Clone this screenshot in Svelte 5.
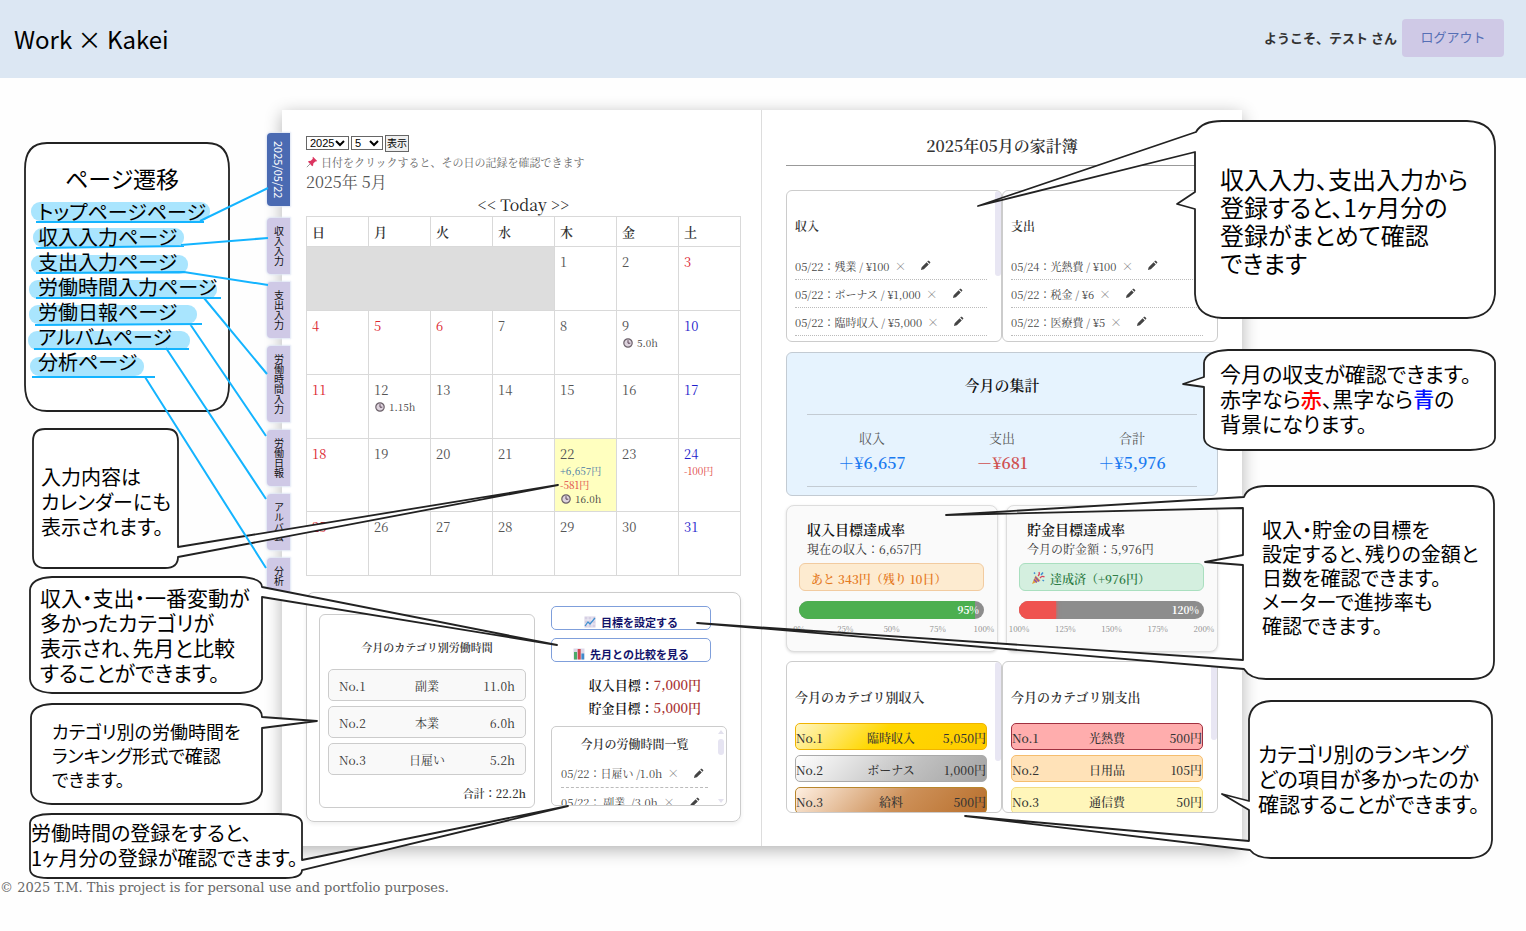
<script>
  const tabs = ['収入入力', '支出入力', '労働時間入力', '労働日報', 'アルバム', '分析'];
  const weekdays = ['日', '月', '火', '水', '木', '金', '土'];
  const notes = {
    9: { hours: '5.0h' },
    12: { hours: '1.15h' },
    22: { income: '+6,657円', expense: '-581円', hours: '16.0h' },
    24: { expense: '-100円' }
  };
  const holidays = [3, 4, 5, 6, 11, 18, 25];
  const blueDays = [10, 17, 24, 31];
  const weeks = [4, 11, 18, 25].map((s) => Array.from({ length: 7 }, (_, i) => s + i));

  const workRanks = [
    ['No.1', '副業', '11.0h'],
    ['No.2', '本業', '6.0h'],
    ['No.3', '日雇い', '5.2h']
  ];
  const ledgers = [
    { title: '収入', thumb: true, rows: ['05/22：残業 / ¥100', '05/22：ボーナス / ¥1,000', '05/22：臨時収入 / ¥5,000'] },
    { title: '支出', thumb: false, rows: ['05/24：光熱費 / ¥100', '05/22：税金 / ¥6', '05/22：医療費 / ¥5'] }
  ];
  const totals = [
    { label: '収入', value: '＋¥6,657', minus: false },
    { label: '支出', value: '－¥681', minus: true },
    { label: '合計', value: '＋¥5,976', minus: false }
  ];
  const goals = [
    { title: '収入目標達成率', sub: '現在の収入：6,657円', badge: 'あと 343円（残り 10日）', done: false, pct: '95%', fill: 95, ticks: ['0%', '25%', '50%', '75%', '100%'] },
    { title: '貯金目標達成率', sub: '今月の貯金額：5,976円', badge: '達成済（+976円）', done: true, pct: '120%', fill: 20, ticks: ['100%', '125%', '150%', '175%', '200%'] }
  ];
  const categories = [
    { title: '今月のカテゴリ別収入', kind: 'in', rows: [['No.1', '臨時収入', '5,050円'], ['No.2', 'ボーナス', '1,000円'], ['No.3', '給料', '500円']] },
    { title: '今月のカテゴリ別支出', kind: 'out', rows: [['No.1', '光熱費', '500円'], ['No.2', '日用品', '105円'], ['No.3', '通信費', '50円']] }
  ];

  const bubbles = [
    'M47 143H207Q229 143 229 169V385Q229 411 207 411H47Q25 411 25 385V169Q25 143 47 143Z',
    'M45 429H167Q178 429 178 441V547L558 485L178 557Q178 568 165 568H45Q33 568 33 556V441Q33 429 45 429Z',
    'M52 577H240Q262 578 262 587L557 645L262 597V679Q260 692 240 693H52Q31 692 30 679V590Q31 578 52 577Z',
    'M52 704H240Q262 705 262 717L317 721L262 728V791Q260 803 240 804H52Q32 803 31 791V717Q32 705 52 704Z',
    'M52 814H278Q301 814 302 823V860L568 806L302 870Q302 878 285 878H48Q30 878 30 869V823Q31 814 52 814Z',
    'M1222 121H1467Q1495 122 1495 147V294Q1493 317 1467 318H1222Q1196 317 1195 294V209L1177 204L1195 192V152L978 206L1196 132Q1202 121 1222 121Z',
    'M1228 350H1470Q1494 351 1495 363V438Q1494 449 1470 450H1228Q1205 449 1204 438V387L1183 384L1204 377V363Q1205 351 1228 350Z',
    'M1266 486H1473Q1494 487 1494 504V661Q1494 678 1473 679H1266Q1250 679 1244 669L697 623L1243 660V565L1205 562L1243 555V508L946 515L1244 497Q1248 486 1266 486Z',
    'M1271 701H1470Q1492 702 1492 719V840Q1491 857 1470 858H1271Q1256 858 1250 850L965 816L1249 841V810L1222 794L1249 801V719Q1251 702 1271 701Z'
  ];
  const highlights = [[31, 202, 179], [33, 228, 151], [31, 255, 157], [29, 280, 188], [29, 305, 168], [28, 331, 162], [30, 357, 114]];
  const links = [
    'M36 222H204M200 221L268 188', 'M36 248L184 246M181 245L268 238', 'M36 273L184 272L268 285', 'M36 298H221M204 298L267 374',
    'M35 325L202 324M190 324L266 436', 'M34 349H189M166 348L266 499', 'M32 377H155M145 377L266 568'
  ];
  const pages = ['トップページページ', '収入入力ページ', '支出入力ページ', '労働時間入力ページ', '労働日報ページ', 'アルバムページ', '分析ページ'];
  const captions = [
    { x: 65, y: 164, size: 't', lines: ['ページ遷移'] },
    { x: 38, y: 199, size: 'p', lines: pages },
    { x: 41, y: 464, size: 'p', lines: ['入力内容は', 'カレンダーにも', '表示されます。'] },
    { x: 40, y: 585, size: 'm', lines: ['収入・支出・一番変動が', '多かったカテゴリが', '表示され、先月と比較', 'することができます。'] },
    { x: 52, y: 719, size: 's', lines: ['カテゴリ別の労働時間を', 'ランキング形式で確認', 'できます。'] },
    { x: 31, y: 820, size: 'p', lines: ['労働時間の登録をすると、', '1ヶ月分の登録が確認できます。'] },
    { x: 1220, y: 165, size: 'l', lines: ['収入入力、支出入力から', '登録すると、1ヶ月分の', '登録がまとめて確認', 'できます'] },
    { x: 1262, y: 518, size: 'n', lines: ['収入・貯金の目標を', '設定すると、残りの金額と', '日数を確認できます。', 'メーターで進捗率も', '確認できます。'] },
    { x: 1258, y: 741, size: 'm', lines: ['カテゴリ別のランキング', 'どの項目が多かったのか', '確認することができます。'] }
  ];
</script>

{#snippet pencil()}
  <svg class="pencil" viewBox="0 0 12 12" aria-hidden="true"><path d="M1 11l.8-3.2L7.200 2.400l2.400 2.400L4.200 10.200zM7.900 1.700l.8-.8q.5-.4 1 0l1.400 1.400q.4.500 0 1l-.8.8z" fill="#444" /></svg>
{/snippet}
{#snippet clock()}
  <svg class="clock" viewBox="0 0 12 12" aria-hidden="true"><circle cx="6" cy="6" r="4.200" fill="#ddd3dd" stroke="#6b6069" stroke-width="1.200" /><path d="M6 3.200v3h2.300" fill="none" stroke="#5c4658" /></svg>
{/snippet}
{#snippet entry(text)}
  <li><span>{text}</span><button class="x" aria-label="削除">×</button><button aria-label="編集">{@render pencil()}</button></li>
{/snippet}

<header>
  <h1>Work × Kakei</h1>
  <div class="user"><span>ようこそ、テスト さん</span><button class="logout">ログアウト</button></div>
</header>

<main>
  <div class="book">
    <nav class="tabs">
      <a class="active" href="#top">2025/05/22</a>
      {#each tabs as t}<a href="#{t}">{t}</a>{/each}
    </nav>

    <section class="page left">
      <form class="picker">
        <select class="year" aria-label="年"><option>2025</option></select>
        <select class="month" aria-label="月"><option>5</option></select>
        <button type="button">表示</button>
      </form>
      <p class="hint">
        <svg viewBox="0 0 12 12" aria-hidden="true"><path d="M7 .8L11.200 5l-1.100.5-.8-.1-2 2-.2 2.100-.9.700L2 5.800l.8-.9 2-.2 2-2-.2-1.100z" fill="#dc3560" /><path d="M4.200 7.800L.8 11.200" stroke="#999" /></svg>
        日付をクリックすると、その日の記録を確認できます
      </p>
      <p class="ym">2025年 5月</p>
      <p class="today"><a href="#prev">&lt;&lt;</a> <a href="#today">Today</a> <a href="#next">&gt;&gt;</a></p>
      <table>
        <thead><tr>{#each weekdays as w}<th>{w}</th>{/each}</tr></thead>
        <tbody>
          <tr><td class="blank" colspan="4"></td><td>1</td><td>2</td><td class="red">3</td></tr>
          {#each weeks as week}
            <tr>
              {#each week as d}
                <td class:red={holidays.includes(d)} class:blue={blueDays.includes(d)} class:current={d === 22}>
                  {d}
                  {#if notes[d]}
                    {#if notes[d].income}<div class="note plus">{notes[d].income}</div>{/if}
                    {#if notes[d].expense}<div class="note minus">{notes[d].expense}</div>{/if}
                    {#if notes[d].hours}<div class="note hours">{@render clock()}{notes[d].hours}</div>{/if}
                  {/if}
                </td>
              {/each}
            </tr>
          {/each}
        </tbody>
      </table>

      <div class="work">
        <div class="ranking">
          <h3>今月のカテゴリ別労働時間</h3>
          <ol>
            {#each workRanks as r}<li><span>{r[0]}</span><span>{r[1]}</span><span>{r[2]}</span></li>{/each}
          </ol>
          <p>合計：22.2h</p>
        </div>
        <div class="side">
          <button class="action">
            <svg viewBox="0 0 12 12" aria-hidden="true"><path d="M.5.5h11v11H.5z" fill="#d5cfe3" /><path d="M.5 4h11M.5 8h11M4 .5v11M8 .5v11" stroke="#eeeaf5" /><path d="M1 10l3-4 2 2 5-6" fill="none" stroke="#3d8fd0" stroke-width="1.200" /></svg>
            目標を設定する
          </button>
          <button class="action">
            <svg viewBox="0 0 12 12" aria-hidden="true"><path d="M.5.5h11v11H.5z" fill="#dcd7e8" /><path d="M1 4h3v7.500H1z" fill="#4cab6a" /><path d="M4.700 1h3v10.500h-3z" fill="#d2474f" /><path d="M8.400 5.500h2.800v6H8.400z" fill="#3f8bcd" /></svg>
            先月との比較を見る
          </button>
          <dl>
            <div><dt>収入目標：</dt><dd>7,000円</dd></div>
            <div><dt>貯金目標：</dt><dd>5,000円</dd></div>
          </dl>
          <div class="hours-list">
            <h3>今月の労働時間一覧</h3>
            <ul>
              {@render entry('05/22：日雇い /1.0h')}
              {@render entry('05/22： 副業  /3.0h')}
            </ul>
            <svg class="bar" viewBox="0 0 10 78" aria-hidden="true"><path d="M5 3l3 4H2zM5 76l3-4H2z" fill="#e3e1ee" /><rect x="2" y="12" width="6" height="16" rx="3" fill="#e6e4f2" /></svg>
          </div>
        </div>
      </div>
    </section>

    <section class="page right">
      <h2>2025年05月の家計簿</h2>
      <div class="pair ledgers">
        {#each ledgers as l}
          <div class="panel" class:thumb={l.thumb}>
            <h3>{l.title}</h3>
            <ul>{#each l.rows as r}{@render entry(r)}{/each}</ul>
          </div>
        {/each}
      </div>

      <div class="summary">
        <h3>今月の集計</h3>
        <div class="totals">
          {#each totals as t}
            <div><span>{t.label}</span><strong class:neg={t.minus}>{t.value}</strong></div>
          {/each}
        </div>
      </div>

      <div class="goals">
        {#each goals as g}
          <div class="goal">
            <h3>{g.title}</h3>
            <p>{g.sub}</p>
            <div class="badge" class:done={g.done}>
              {#if g.done}
                <svg viewBox="0 0 14 14" aria-hidden="true"><path d="M1 13l3.500-8.500 5 5z" fill="#e2a13a" /><path d="M3 8.500l2.800 3M4.200 6l4 4.500" stroke="#8b4fb0" stroke-width="1.300" /><path d="M7 5q2-1.500 1-4M9 7q2-2.500 4.500-1" fill="none" stroke="#d9445b" stroke-width="1.300" /><path d="M10 4l2-2.500M3 1.500l1 1.200M11.500 9l1.500 1" stroke="#3d8fd0" stroke-width="1.500" /></svg>
              {/if}
              {g.badge}
            </div>
            <div class="meter"><div class="fill" class:over={g.done} style="width: {g.fill}%"></div><span>{g.pct}</span></div>
            <div class="ticks">{#each g.ticks as t}<span>{t}</span>{/each}</div>
          </div>
        {/each}
      </div>

      <div class="pair cats">
        {#each categories as c}
          <div class="panel thumb {c.kind}">
            <h3>{c.title}</h3>
            <ol>{#each c.rows as r}<li><span>{r[0]}</span><span>{r[1]}</span><span>{r[2]}</span></li>{/each}</ol>
          </div>
        {/each}
      </div>
    </section>

    <div class="guide">
      <svg viewBox="0 0 1520 931" aria-hidden="true">
        {#each bubbles as d}<path {d} fill="#fff" stroke="#222" stroke-width="1.800" stroke-linejoin="round" />{/each}
        {#each highlights as [x, y, w]}<rect {x} {y} width={w} height="19" rx="9" fill="#a9e5fe" />{/each}
        {#each links as d}<path {d} fill="none" stroke="#14b4ff" stroke-width="2" />{/each}
      </svg>
      <div class="caption m" style="left: 1220px; top: 361px">
        <p>今月の収支が確認できます。</p>
        <p>赤字なら<b class="r">赤</b>、黒字なら<b class="b">青</b>の</p>
        <p>背景になります。</p>
      </div>
      {#each captions as c}
        <div class="caption {c.size}" style="left: {c.x}px; top: {c.y}px">{#each c.lines as t}<p>{t}</p>{/each}</div>
      {/each}
    </div>
  </div>
</main>

<footer>© 2025 T.M. This project is for personal use and portfolio purposes.</footer>

<style>
  :global(body) { background: #fefefe; overflow-x: hidden; }
  :global(#app) { font-family: 'Noto Serif CJK JP', 'Noto Serif JP', 'Liberation Serif', 'Noto Sans CJK JP', serif; color: #333; }
  h1, h2, h3, p, ul, ol, dl, dd { margin: 0; padding: 0; }
  ul, ol { list-style: none; }
  button { font-family: inherit; cursor: pointer; }
  * { box-sizing: border-box; }
  a { color: inherit; text-decoration: none; }

  header { display: flex; align-items: center; justify-content: space-between; height: 78px; padding: 0 22px 2px 14px; background: #dce7f3; }
  h1 { padding-top: 2px; font: 400 24px/36px 'Noto Sans CJK JP', sans-serif; color: #000; }
  .user { display: flex; align-items: center; gap: 5px; font: 700 13px/18px 'Noto Sans CJK JP', sans-serif; }
  .logout { width: 102px; height: 38px; padding: 0 0 3px; border: 0; border-radius: 4px; background: #cfc9e6; color: #566fb5; font: 400 13px/18px 'Noto Sans CJK JP', sans-serif; }

  main { padding: 32px 2px 0 0; }
  .book { position: relative; display: grid; grid-template-columns: 1fr 1fr; width: 960px; min-height: 736px; margin: 0 auto; background: #fff; box-shadow: 0 4px 16px rgba(0, 0, 0, 0.3); }
  .page { padding: 24px; min-width: 0; }
  .left { border-right: 1px solid #ddd; padding-right: 20px; }

  .tabs { position: absolute; left: -15px; top: 23px; display: flex; flex-direction: column; gap: 8px; }
  .tabs a { width: 23px; padding: 8px 0; display: flex; align-items: center; justify-content: center; writing-mode: vertical-rl; background: #cfc9e6; border-radius: 4px 0 0 4px; color: #111; font: 10px/20px 'Noto Sans CJK JP', sans-serif; box-shadow: 0 0 2px 1px #dfe6f4; }
  .tabs .active { margin-bottom: 4px; background: #4a6ab2; color: #fff; font-size: 11px; }

  .picker { display: flex; align-items: center; gap: 2px; height: 18px; }
  select { appearance: none; height: 14px; padding: 0 0 0 3px; border: 1px solid #666; border-radius: 0; background: #fff url("data:image/svg+xml,%3Csvg xmlns='http://www.w3.org/2000/svg' width='10' height='8'%3E%3Cpath d='M1 2l4 4 4-4' fill='none' stroke='black' stroke-width='2'/%3E%3C/svg%3E") no-repeat right 3px center; color: #000; font: 11px/12px 'Liberation Sans', sans-serif; }
  .year { width: 43px; }
  .month { width: 32px; }
  .picker button { height: 17px; padding: 0 1px; border: 1px solid #666; background: #efefef; color: #000; font: 10px/14px 'Noto Sans CJK JP', sans-serif; }
  .hint { display: flex; align-items: center; gap: 3px; font-size: 11px; line-height: 20px; color: #666; }
  .hint svg { width: 12px; height: 12px; }
  .ym { font-size: 16px; line-height: 20px; color: #555; }
  .today { margin-top: 2px; font-size: 16px; line-height: 22px; text-align: center; color: #222; }

  table { width: 100%; border-collapse: collapse; table-layout: fixed; font-size: 13px; color: #555; }
  th, td { border: 1px solid #d9d9d9; padding: 5px; text-align: left; vertical-align: top; }
  th { height: 30px; padding: 5px 5px 4px; line-height: 20px; color: #333; font-weight: 600; }
  td { height: 64px; line-height: 20px; }
  .blank { background: #ddd; }
  .red { color: #dc2630; }
  .blue { color: #1e1ecb; }
  .current { background: #ffffbf; }
  .note { font-size: 10px; line-height: 14px; white-space: nowrap; }
  .plus { color: #4a7ba6; }
  .minus { color: #e04444; }
  .hours { display: flex; align-items: center; gap: 3px; color: #444; }
  .clock { width: 12px; height: 12px; }

  .work { display: grid; grid-template-columns: 216px 1fr; gap: 16px; margin-top: 16px; padding: 13px 12px 13px; height: 230px; border: 1px solid #ccc; border-radius: 8px; box-shadow: 0 2px 4px #eee; }
  .ranking { margin-top: 8px; height: 194px; padding: 22px 8px 0; border: 1px solid #ccc; border-radius: 6px; }
  .ranking h3 { font-size: 11px; line-height: 20px; font-weight: 600; text-align: center; }
  .ranking ol { display: grid; gap: 5px; margin-top: 12px; }
  .ranking li { display: grid; grid-template-columns: 1fr 1fr 1fr; align-items: center; height: 32px; padding: 0 10px; border: 1px solid #ccc; border-radius: 5px; background: #f9f9f9; font-size: 12px; }
  li span:nth-child(2) { text-align: center; }
  .ranking li span:last-child, .cats li span:last-child { text-align: right; }
  .ranking p { margin-top: 9px; font-size: 11px; line-height: 18px; font-weight: 600; text-align: right; }
  .side { min-width: 0; }
  .action { display: flex; align-items: center; justify-content: center; gap: 5px; width: 160px; height: 24px; margin-bottom: 8px; padding: 7px 0 0; border: 1px solid #7f9fdb; border-radius: 5px; background: #fff; color: #12126a; font: 700 11px/16px 'Noto Sans CJK JP', sans-serif; }
  .action svg { width: 12px; height: 12px; }
  dl { width: 150px; margin-top: 11px; }
  dl div { display: flex; justify-content: flex-end; align-items: center; font-size: 14px; line-height: 23px; }
  dt { font-size: 13px; font-weight: 600; color: #111; }
  dd { color: #a83232; font-size: 13px; font-weight: 600; }
  .hours-list { position: relative; width: 176px; height: 80px; margin-top: 7px; padding: 7px 18px 0 9px; border: 1px solid #ccc; border-radius: 5px; overflow: hidden; }
  .hours-list h3 { font-size: 12px; line-height: 20px; font-weight: 600; text-align: center; }
  .hours-list ul { margin-top: 5px; }
  .hours-list .bar { position: absolute; right: 0; top: 0; width: 10px; height: 78px; }
  ul li { display: flex; align-items: center; height: 28px; font-size: 11px; color: #444; border-bottom: 1px dotted #bbb; white-space: pre; }
  .hours-list li { height: 29px; border-bottom: 1px dashed #bbb; }
  li button { display: flex; padding: 0; border: 0; background: none; }
  li .x { margin: 0 14px 0 5px; font-size: 12px; line-height: 16px; color: #777; }
  .pencil { width: 11px; height: 11px; }

  h2 { height: 32px; font-size: 16px; line-height: 24px; font-weight: 600; text-align: center; border-bottom: 1px solid #999; }
  .pair { display: grid; grid-template-columns: 1fr 1fr; }
  .panel { position: relative; height: 152px; padding: 25px 14px 0 8px; border: 1px solid #ccc; border-radius: 6px; overflow: hidden; }
  .panel.thumb::after { content: ''; position: absolute; right: 0; top: 0; width: 6px; height: 85px; border-radius: 3px; background: #e8e6f3; }
  .panel.in::after { height: 99px; }
  .panel.out::after { height: 78px; }
  .panel h3 { font-size: 12px; line-height: 20px; font-weight: 600; }
  .ledgers { margin-top: 24px; }
  .ledgers ul { margin-top: 16px; }
  .summary { height: 144px; margin-top: 10px; padding: 20px 20px 8px; border: 1px solid #c3cbd3; border-radius: 6px; background: #e6f3fe; text-align: center; }
  .summary h3 { font-size: 15px; line-height: 24px; font-weight: 600; color: #111; }
  .totals { display: grid; grid-template-columns: repeat(3, 1fr); margin-top: 17px; padding: 11px 0 10px; border-top: 1px solid #c3cbd3; border-bottom: 1px solid #c3cbd3; }
  .totals div { display: grid; font-size: 13px; line-height: 24px; color: #555; }
  .totals strong { font-size: 16px; line-height: 26px; font-weight: 600; color: #1a7af0; }
  .totals .neg { color: #cf5050; }

  .goals { display: grid; grid-template-columns: 1fr 1fr; gap: 8px; margin-top: 9px; }
  .goal { height: 147px; padding: 13px 13px 0 12px; border: 1px solid #ddd; border-radius: 8px; background: #fafafa; box-shadow: 0 1px 3px #ddd; }
  .goal h3 { padding-left: 8px; font-size: 14px; line-height: 20px; font-weight: 600; color: #111; }
  .goal p { padding-left: 8px; font-size: 12px; line-height: 20px; color: #333; }
  .badge { display: flex; align-items: center; gap: 5px; height: 28px; margin-top: 4px; padding: 2px 11px 0; border: 1px solid #f2cba0; border-radius: 6px; background: #fdebd0; color: #e57a1f; font-size: 12px; font-weight: 600; }
  .badge.done { border-color: #a9dfbf; background: #d4efdf; color: #2e7d46; }
  .badge svg { width: 14px; height: 14px; }
  .meter { position: relative; height: 18px; margin-top: 10px; border-radius: 9px; background: #8d8d8d; overflow: hidden; }
  .fill { height: 100%; background: #4caf50; }
  .over { background: #ef5350; box-shadow: 0 0 4px #ef5350; }
  .meter span { position: absolute; right: 5px; top: 0; color: #fff; font-size: 10px; line-height: 18px; font-weight: 700; }
  .ticks { display: grid; grid-template-columns: repeat(5, 1fr); margin: 3px -23px 0; text-align: center; font-size: 8px; line-height: 14px; color: #888; }

  .cats { margin-top: 9px; }
  .cats h3 { font-size: 13px; }
  .cats ol { display: grid; gap: 5px; margin-top: 16px; }
  .cats li { display: grid; grid-template-columns: 1fr 1fr 1fr; align-items: center; height: 27px; padding: 1px 0 0; border: 1px solid #ffc400; border-radius: 5px; font-size: 12px; font-weight: 500; white-space: nowrap; }
  .in li:nth-child(1) { background: linear-gradient(135deg, #fff6c4, #ffd700 45%, #ffcc00); border-color: #f0b400; }
  .in li:nth-child(2) { background: linear-gradient(135deg, #fff, #c0c0c0 60%, #a3a3a3); border-color: #aaa; }
  .in li:nth-child(3) { background: linear-gradient(135deg, #fff0e2, #cd9058 55%, #b86f2c); border-color: #b8862b; }
  .out li:nth-child(1) { background: #ffadad; border-color: #a03040; }
  .out li:nth-child(2) { background: #ffe2b8; border-color: #f5bd6e; }
  .out li:nth-child(3) { background: #fff6ba; border-color: #f3dc82; }

  .guide { position: absolute; left: -282px; top: -110px; width: 1520px; height: 931px; pointer-events: none; }
  .guide > svg { position: absolute; inset: 0; width: 100%; height: 100%; }
  .caption { position: absolute; color: #000; font-family: 'Noto Sans CJK JP', sans-serif; font-feature-settings: 'palt'; white-space: nowrap; }
  .t { font-size: 23px; line-height: 28px; }
  .l { font-size: 24px; line-height: 28px; }
  .m { font-size: 21px; line-height: 25px; }
  .p { font-size: 20px; line-height: 25px; }
  .n { font-size: 20px; line-height: 24px; }
  .s { font-size: 18px; line-height: 24px; }
  .r { color: #f00; font-weight: 500; }
  .b { color: #0010ff; font-weight: 500; }

  footer { margin-top: 32px; font: 13px/20px 'DejaVu Serif', serif; color: #666; }
</style>
